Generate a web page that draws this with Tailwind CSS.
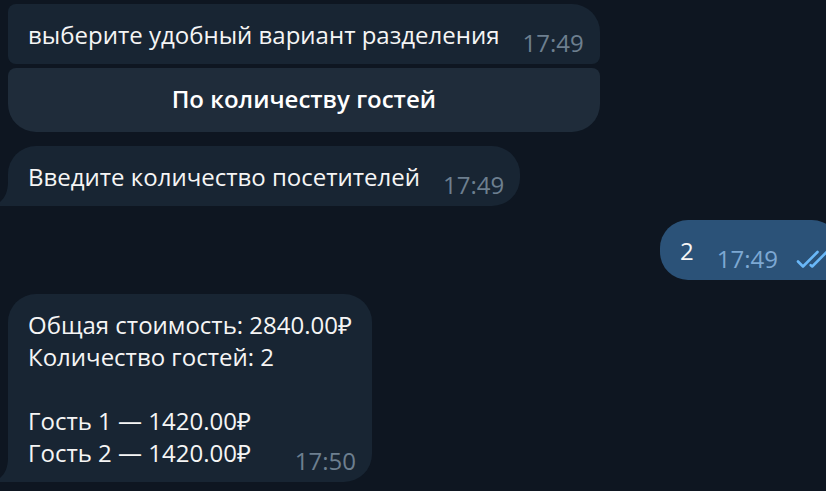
<!DOCTYPE html>
<html lang="ru">
<head>
<meta charset="utf-8">
<meta name="viewport" content="width=device-width, initial-scale=1">
<title>Чат</title>
<script src="https://cdn.jsdelivr.net/npm/@tailwindcss/browser@4"></script>
</head>
<body class="min-h-screen overflow-x-hidden bg-[#0e1621] font-['Open_Sans','Noto_Sans',sans-serif] text-2xl/8 text-[#f5f5f5]">
<main class="flex min-h-screen flex-col items-start overflow-hidden pt-1 pl-2">
  <section class="flex flex-col gap-1">
    <article class="flex items-end gap-[23px] rounded-lg rounded-tr-[28px] bg-[#182533] pt-[15px] pr-4 pl-5">
      <p class="pb-[13px]">выберите удобный вариант разделения</p>
      <time class="pb-[5px] text-[#6d7f8f]">17:49</time>
    </article>
    <button type="button" class="h-16 rounded-lg rounded-b-[28px] bg-[#1f2c3a] px-5 pb-0.5 font-semibold text-white">По количеству гостей</button>
  </section>

  <article class="relative mt-3.5 flex items-end gap-[23px] rounded-[28px] rounded-bl-none bg-[#182533] pt-[15px] pr-4 pl-5">
    <svg class="absolute bottom-0 -left-2 h-6 w-2" viewBox="0 0 8 24" fill="#182533" aria-hidden="true"><path d="M8 0C8 9 5 16 0 20V24H8Z"/></svg>
    <p class="pb-[13px]">Введите количество посетителей</p>
    <time class="pb-[5px] text-[#6d7f8f]">17:49</time>
  </article>

  <article class="mt-3.5 -mr-3.5 flex items-end gap-[23px] self-end rounded-[28px] rounded-br-none bg-[#2b5278] pt-[15px] pr-1.5 pl-5">
    <p class="pb-[13px]">2</p>
    <div class="flex items-end gap-4">
      <time class="pb-[5px] text-[#7da8d3]">17:49</time>
      <svg class="h-8 w-10" viewBox="0 0 40 32" fill="none" stroke="#6ab8f8" stroke-width="2.6" stroke-linecap="round" stroke-linejoin="round" role="img" aria-label="Прочитано"><path d="M4 13.5L9 18.5L23.5 4M16.7 17.2L18.2 18.5L32.7 4"/></svg>
    </div>
  </article>

  <article class="relative mt-3.5 rounded-[28px] rounded-bl-none bg-[#182533] pt-[15px] pr-5 pl-5">
    <svg class="absolute bottom-0 -left-2 h-6 w-2" viewBox="0 0 8 24" fill="#182533" aria-hidden="true"><path d="M8 0C8 9 5 16 0 20V24H8Z"/></svg>
    <p>Общая стоимость: 2840.00₽</p>
    <p>Количество гостей: 2</p>
    <p class="pt-8">Гость 1 — 1420.00₽</p>
    <div class="-mr-1 flex items-end justify-between">
      <p class="pb-[13px]">Гость 2 — 1420.00₽</p>
      <time class="pb-[5px] text-[#6d7f8f]">17:50</time>
    </div>
  </article>
</main>
</body>
</html>
